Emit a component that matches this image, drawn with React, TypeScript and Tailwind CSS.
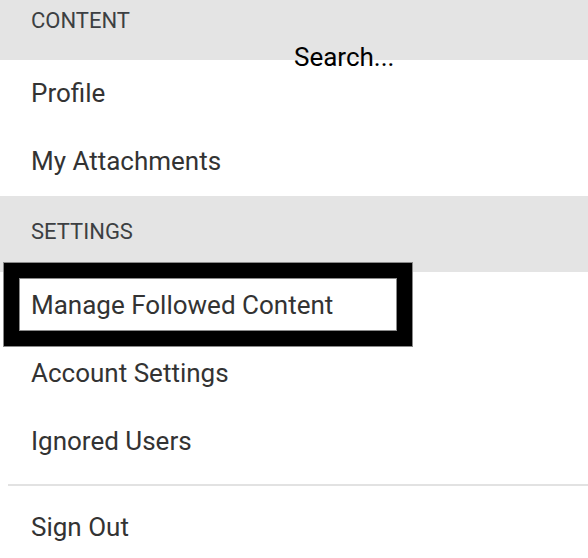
import React from "react";

const font = { fontFamily: "Roboto, 'Liberation Sans', sans-serif" };

function Header({ label, className }: { label: string; className: string }) {
  return (
    <div className={`bg-[#e4e4e4] pl-[31px] text-[22px] leading-[22px] text-[#3c3f42] ${className}`}>
      {label}
    </div>
  );
}

function Row({ label }: { label: string }) {
  return (
    <div className="h-[68px] pl-[31px] pt-[20px] text-[26px] leading-[26px] text-[#333]">
      {label}
    </div>
  );
}

export default function App() {
  return (
    <div className="relative w-[588px] h-[558px] overflow-hidden bg-white" style={font}>
      {/* content */}
      <Header label="CONTENT" className="h-[60px] pt-[10px]" />
      <Row label="Profile" />
      <Row label="My Attachments" />

      {/* settings */}
      <Header label="SETTINGS" className="h-[76px] pt-[25px]" />
      <div className="pt-[6px]">
        <div className="h-[62px]">
          <div className="ml-[19px] w-[378px] h-[53px] pl-[12px] pt-[14px] text-[26px] leading-[26px] text-[#333] outline-[15px] outline-black shadow-[0_0_0_16px_#8a8a8a,inset_0_0_0_1px_#8a8a8a]">
            Manage Followed Content
          </div>
        </div>
        <Row label="Account Settings" />
        <Row label="Ignored Users" />
      </div>

      <div className="mt-[8px] ml-[8px] h-[2px] bg-[#e2e2e2]" />
      <div className="pl-[31px] pt-[28px] text-[26px] leading-[26px] text-[#333]">Sign Out</div>

      {/* search overlay */}
      <div className="absolute left-[294px] top-[44px] text-[26px] leading-[26px] text-black">Search...</div>
    </div>
  );
}
